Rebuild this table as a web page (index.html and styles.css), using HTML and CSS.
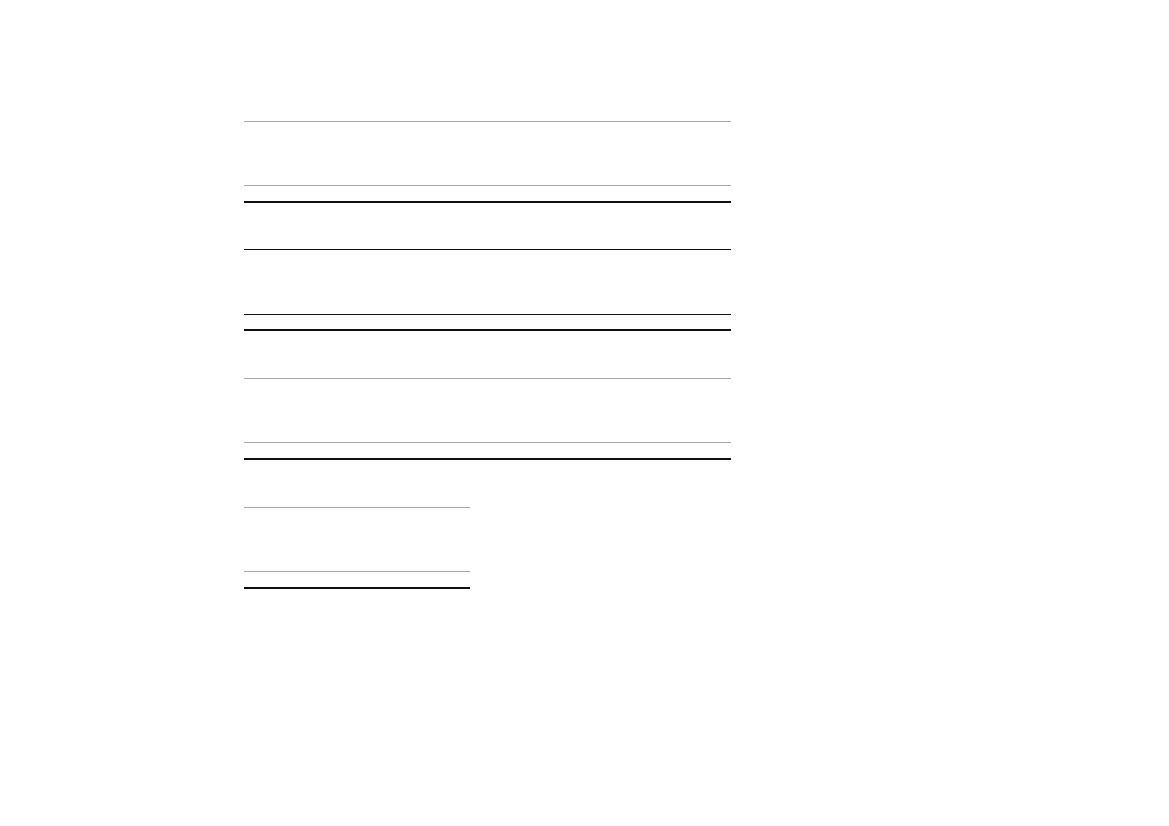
FILE: index.html
```html
<!DOCTYPE html>
<html lang="en">
<head>
<meta charset="utf-8">
<title>Sections</title>
<link rel="stylesheet" href="styles.css">
</head>
<body>
<main class="page">
  <section class="block">
    <div class="row"></div>
    <div class="rule"></div>
  </section>
  <section class="block block-active">
    <div class="row"></div>
    <div class="rule"></div>
  </section>
  <section class="block">
    <div class="row"></div>
    <div class="rule"></div>
  </section>
  <section class="block block-half">
    <div class="row"></div>
    <div class="rule"></div>
  </section>
</main>
</body>
</html>
```
FILE: styles.css
```css
html, body {
  margin: 0;
  padding: 0;
  background: #ffffff;
  font-family: "Liberation Sans", Arial, sans-serif;
}

.page {
  display: flex;
  flex-direction: column;
  gap: 46.67px;
  padding: 120.8px 0 0 244px;
}

.block {
  width: 487px;
  display: flex;
  flex-direction: column;
}

.block-half {
  width: 226px;
}

.row {
  height: 63.33px;
  border-top: 1px solid #a9a9a9;
  border-bottom: 1px solid #a9a9a9;
}

.block-active .row {
  border-color: #111111;
}

.rule {
  margin-top: 14.67px;
  height: 2px;
  background: #111111;
}
```
